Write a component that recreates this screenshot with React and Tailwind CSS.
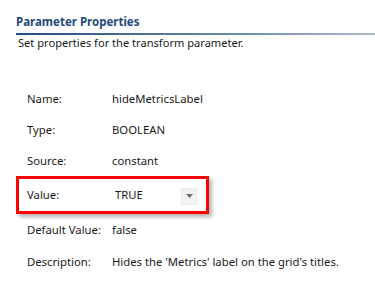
import React from 'react';

function Row({ label, value, h = 'h-[31px]' }) {
  return (
    <div className={`flex items-center ${h} pl-[27px] text-[11.3px] text-[#1a1a1a]`}>
      <span className="w-[85px] shrink-0">{label}</span>
      <span>{value}</span>
    </div>
  );
}

export default function App() {
  return (
    <div className="w-[375px] h-[287px] bg-white overflow-hidden font-['Noto_Sans',sans-serif]">
      <div className="pt-[14px] pl-[16px]">
        <h1 className="text-[11.5px] leading-[16px] font-bold text-[#1f497d]">Parameter Properties</h1>
        <div className="mt-[3px] h-[2px] bg-gradient-to-r from-[#1f4e7e] via-[#5d7fa5] to-[#a9b9cf]" />
        <p className="pl-[2px] text-[11.1px] leading-[16px] text-[#1a1a1a]">Set properties for the transform parameter.</p>
      </div>

      <div className="mt-[33px]">
        <Row label="Name:" value="hideMetricsLabel" />
        <Row label="Type:" value="BOOLEAN" />
        <Row label="Source:" value="constant" />
        <div className="-mt-[1px] ml-[16px] w-[193px] h-[38px] border-[3px] border-[#ff0000] shadow-[3px_3px_4px_rgba(0,0,0,0.3)] flex items-center pl-[8px] text-[11.3px] text-[#1a1a1a]">
          <span className="w-[88px] shrink-0">Value:</span>
          <span className="flex-1">TRUE</span>
          <span className="mr-[9px] w-[16px] h-[17px] mt-[2px] bg-[#f2f2f2] border border-[#ebebeb] flex items-center justify-center">
            <svg width="7" height="4" viewBox="0 0 7 4"><path d="M0 0h7L3.5 4z" fill="#6a6a6a" /></svg>
          </span>
        </div>
        <Row label="Default Value:" value="false" h="h-[32px]" />
        <Row label="Description:" value="Hides the 'Metrics' label on the grid's titles." h="h-[32px]" />
      </div>
    </div>
  );
}
